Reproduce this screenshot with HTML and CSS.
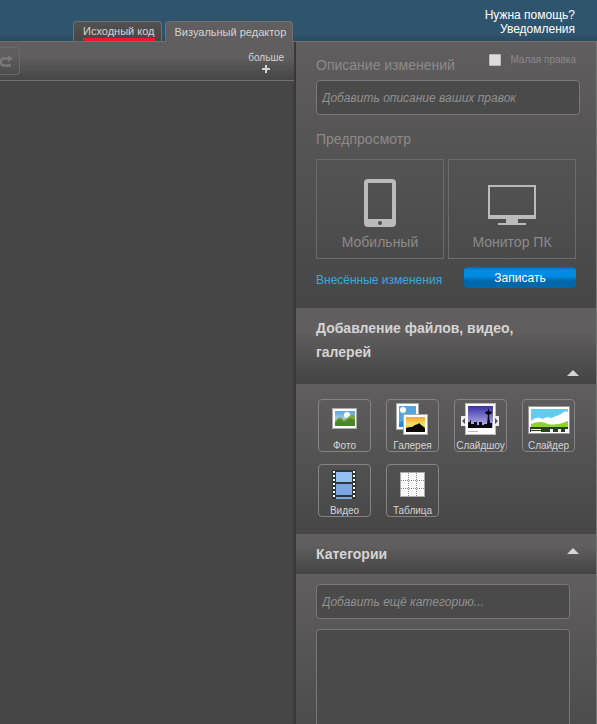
FILE: index.html
```html
<!DOCTYPE html>
<html lang="ru">
<head>
<meta charset="utf-8">
<meta name="viewport" content="width=device-width, initial-scale=1">
<title>Редактор</title>
<link rel="stylesheet" href="styles.css">
</head>
<body>
<header class="topbar">
  <nav class="tabs">
    <button type="button" class="tab tab-source"><span class="marked">Исходный код</span></button>
    <button type="button" class="tab tab-visual">Визуальный редактор</button>
  </nav>
  <nav class="help">
    <a href="#">Нужна помощь?</a>
    <a href="#">Уведомления</a>
  </nav>
</header>
<main class="workspace">
  <section class="editor">
    <div class="toolbar">
      <button type="button" class="redo" aria-label="Повторить">
        <svg width="20" height="16" viewBox="0 0 20 16"><path d="M11 12.500H4Q1 12.500 1 10V8Q1 5.500 4 5.500H9" fill="none" stroke="#7a7878" stroke-width="2.500"/><path d="M8 2L13 5.500L8 9Z" fill="#7a7878"/></svg>
      </button>
      <button type="button" class="more">больше
        <svg width="8" height="8" viewBox="0 0 8 8"><path d="M3 0H5V3H8V5H5V8H3V5H0V3H3Z" fill="#d5d4d4"/></svg>
      </button>
    </div>
    <div class="canvas"></div>
  </section>
  <aside class="rail">
    <section class="panel publish">
      <div class="summary-head">
        <label class="title" for="summary">Описание изменений</label>
        <label class="minor"><input type="checkbox">Малая правка</label>
      </div>
      <input class="field" id="summary" type="text" placeholder="Добавить описание ваших правок">
      <h2 class="title preview-title">Предпросмотр</h2>
      <div class="previews">
        <button type="button" class="preview">
          <svg width="32" height="48" viewBox="0 0 32 48"><path fill="#bbb" fill-rule="evenodd" d="M4 0H28Q32 0 32 4V44Q32 48 28 48H4Q0 48 0 44V4Q0 0 4 0ZM4 4V40H28V4ZM16 42A2 2 0 0 0 16 46A2 2 0 0 0 16 42Z"/></svg>
          Мобильный
        </button>
        <button type="button" class="preview">
          <svg width="48" height="42" viewBox="0 0 48 42"><path fill="#bbb" fill-rule="evenodd" d="M0 0H48V34H30V38H38V40H10V38H18V34H0ZM2 2V30H46V2Z"/></svg>
          Монитор ПК
        </button>
      </div>
      <div class="actions">
        <a href="#" class="diff">Внесённые изменения</a>
        <button type="button" class="save">Записать</button>
      </div>
    </section>
    <h3 class="bar bar-tall">Добавление файлов, видео, галерей<span class="arrow"></span></h3>
    <section class="panel media">
      <button type="button" class="tile">
        <svg viewBox="0 0 51 40"><defs><linearGradient id="sky" x2="0" y2="1"><stop stop-color="#5fa5dc"/><stop offset="1" stop-color="#e2f3fb"/></linearGradient></defs><rect x="13.500" y="8.500" width="24" height="20" fill="#fff" stroke="#aaa"/><path fill="url(#sky)" d="M16 11h20v15H16z"/><circle cx="28" cy="15" r="3" fill="#fff"/><path fill="#79a944" d="M16 21Q21 14 25 20L32 15Q35 13 36 16V26H16z"/><path fill="#4b852a" d="M16 23L20 19Q23 19 25 22L31 18L36 20V26H16z"/></svg>
        Фото
      </button>
      <button type="button" class="tile">
        <svg viewBox="0 0 51 40"><defs><linearGradient id="dusk" x2="0" y2="1"><stop stop-color="#f2a92c"/><stop offset="0.500" stop-color="#fbdc72"/><stop offset="1" stop-color="#f0a530"/></linearGradient></defs><rect x="9.500" y="3.500" width="22" height="26" fill="#fff" stroke="#aaa"/><path fill="#2888c9" d="M12 6h17v21H12z"/><path fill="#53a5db" d="M12 6h17v9L12 23z"/><circle cx="16" cy="10" r="3" fill="#fff"/><rect x="16.500" y="14.500" width="24" height="20" fill="#fff" stroke="#aaa"/><path fill="url(#dusk)" d="M19 17h19v15H19z"/><path fill="#090805" d="M19 28l4-1 2 0 3-2 3-1 1-1 1 1 5 4v4H19z"/></svg>
        Галерея
      </button>
      <button type="button" class="tile">
        <svg viewBox="0 0 51 40"><defs><linearGradient id="night" x2="0" y2="1"><stop stop-color="#3a31a5"/><stop offset="1" stop-color="#c6c0f0"/></linearGradient></defs><rect x="10.500" y="3.500" width="30" height="31" fill="#fff" stroke="#bbb"/><path fill="url(#night)" d="M13 6h25v22H13z"/><path fill="#080811" d="M13 22h2v-2h1v4h3v-2h3v3h2v-3h3v3h2v-1h3l1-9-3-2v-1l3-1V9h1v2l3 1v1l-3 2 1 8h2v5H13z"/><path fill="#bbb" d="M13 31h10v1H13z"/><path fill="#eee" d="M6 16h5v10H6zM39 16h5v10h-5z"/><path fill="#555" d="M10 18v6l-3-3zM40 18v6l3-3z"/></svg>
        Слайдшоу
      </button>
      <button type="button" class="tile">
        <svg viewBox="0 0 51 40"><rect x="5.500" y="6.500" width="41" height="27" fill="#fff" stroke="#999"/><path fill="#62ccee" d="M8 9h37v18H8z"/><path fill="#fff" d="M8 21q6-6 12-2 3-3 8-1 6-2 10-4 4-4 7-2v15H8z"/><path fill="#8fcf2e" d="M8 24q9-4 17 0 8 2 20-3v6H8z"/><path fill="#294027" d="M7 27h38v5H7z"/><path fill="#eee" d="M8 29h10v1H8zM8 31h10v1H8zM27 29h3v3h-3zM35 29h3v3h-3zM42 29h3v3h-3z"/></svg>
        Слайдер
      </button>
      <button type="button" class="tile">
        <svg viewBox="0 0 51 40"><path fill="#303638" d="M13 5h24v29H13z"/><path fill="#94bfef" d="M17 7h16v10H17z"/><path fill="#7ba5e3" d="M17 19h16v11H17zM17 32h16v2H17z"/><path d="M15 6v28M35 6v28" stroke="#fff" stroke-width="2" stroke-dasharray="2 2"/></svg>
        Видео
      </button>
      <button type="button" class="tile">
        <svg viewBox="0 0 51 40"><rect x="13.500" y="7.500" width="24" height="24" fill="#f8f8f8" stroke="#aaa"/><path fill="none" stroke="#888" stroke-dasharray="1 1" d="M21.500 8v23M29.500 8v23M14 15.500h23M14 23.500h23"/></svg>
        Таблица
      </button>
    </section>
    <h3 class="bar">Категории<span class="arrow"></span></h3>
    <section class="panel categories">
      <input class="field" type="text" aria-label="Категория" placeholder="Добавить ещё категорию...">
      <div class="category-list"></div>
    </section>
  </aside>
</main>
</body>
</html>
```
FILE: styles.css
```css
* { box-sizing: border-box; }
body {
  display: flex;
  flex-direction: column;
  height: 100vh;
  margin: 0;
  overflow: hidden;
  background: #464646;
  font-family: "Liberation Sans", Arial, sans-serif;
  font-size: 12px;
}
button { margin: 0; padding: 0; border: 0; background: none; font: inherit; cursor: pointer; }
svg { display: block; flex: none; }
a { text-decoration: none; }
h2, h3 { margin: 0; }

.topbar {
  display: flex;
  flex: none;
  justify-content: space-between;
  height: 42px;
  border-bottom: 1px solid #706e6e;
  background: linear-gradient(#2f556e 34px, #284a61);
}
.tabs { display: flex; align-items: flex-end; gap: 3px; padding-left: 73px; }
.tab {
  height: 20px;
  padding: 0 6px 0 9px;
  border: 1px solid #727070;
  border-bottom: 0;
  border-radius: 4px 4px 0 0;
  color: #d5d4d4;
  font-size: 11px;
  line-height: 19px;
  white-space: nowrap;
}
.tab-source { background: linear-gradient(#535151, #464646); }
.tab-visual { height: 21px; margin-bottom: -1px; background: #605e5e; }
.marked { display: block; box-shadow: inset 0 -3px #ed1c24; line-height: 19px; }
.help {
  display: flex;
  flex-direction: column;
  align-items: flex-end;
  padding: 8px 22px 0 0;
  line-height: 14px;
}
.help a { color: #fff; }

.workspace { display: flex; flex: 1; min-height: 0; }
.editor { display: flex; flex: 1; flex-direction: column; min-width: 0; box-shadow: inset -4px 0 3px -2px #363636; }
.toolbar {
  display: flex;
  align-items: flex-start;
  justify-content: space-between;
  height: 39px;
  margin-right: 2px;
  padding: 5px 10px 0 0;
  border-bottom: 1px solid #737171;
  background: linear-gradient(#605e5e 14px, #464646);
}
.redo {
  display: flex;
  align-items: center;
  width: 20px;
  height: 28px;
  border: 1px solid #6b6969;
  border-left: 0;
  border-radius: 0 4px 4px 0;
}
.more {
  display: flex;
  flex-direction: column;
  align-items: center;
  gap: 1px;
  margin-top: 5px;
  color: #d5d4d4;
  font-size: 10px;
  line-height: 12px;
}

.rail {
  flex: 0 0 301px;
  overflow: hidden;
  border-right: 1px solid #777;
  color: #8c8a8a;
}
.panel { background: linear-gradient(#605e5e, #464646); }
.publish { padding: 12px 20px 15px; }
.summary-head { display: flex; justify-content: space-between; height: 26px; }
.title { color: #8c8a8a; font-size: 14px; font-weight: normal; line-height: 22px; }
.minor { display: flex; align-items: center; height: 12px; gap: 9px; font-size: 10px; line-height: 12px; }
.minor input {
  width: 12px;
  height: 12px;
  margin: 0;
  border: 1px solid #bbb;
  border-radius: 1px;
  appearance: none;
  background: #ddd;
}
.field {
  display: block;
  width: calc(100% + 4px);
  height: 35px;
  padding: 0 5px;
  border: 1px solid #777;
  border-radius: 4px;
  background: #4a4a4a;
  color: #ccc;
  font: italic 12px "Liberation Sans", Arial, sans-serif;
}
.field::placeholder { color: #929090; opacity: 1; }
.preview-title { margin: 13px 0 9px; }
.previews { display: grid; grid-template-columns: 1fr 1fr; gap: 4px; }
.preview {
  display: flex;
  flex-direction: column;
  align-items: center;
  justify-content: flex-end;
  gap: 6px;
  height: 100px;
  padding-bottom: 7px;
  border: 1px solid #6c6a6a;
  color: #8c8a8a;
  font-size: 14px;
  line-height: 18px;
}
.actions { display: flex; align-items: flex-start; justify-content: space-between; margin-top: 8px; }
.diff { color: #3aa7df; line-height: 26px; }
.save {
  width: 112px;
  height: 21px;
  border-radius: 4px;
  background: linear-gradient(#0068aa 0, #008be5 3px, #008be5 9px, #0068aa 14px);
  color: #fff;
}

.bar {
  display: flex;
  justify-content: space-between;
  height: 40px;
  padding: 8px 17px 0 20px;
  background: linear-gradient(#605e5e 30%, #444);
  color: #d5d4d4;
  font-size: 14px;
  line-height: 24px;
}
.bar-tall { height: 76px; }
.arrow {
  flex: none;
  margin-top: 6px;
  height: 6px;
  border: solid transparent;
  border-width: 0 6px 6px;
  border-bottom-color: #d5d4d4;
}
.bar-tall .arrow { align-self: flex-end; margin-bottom: 8px; }

.media {
  display: grid;
  grid-template-columns: repeat(4, 53px);
  gap: 12px 15px;
  padding: 15px 20px 17px 22px;
}
.tile {
  display: flex;
  flex-direction: column;
  align-items: center;
  height: 53px;
  border: 1px solid #858484;
  border-radius: 4px;
  color: #d5d4d4;
  font-size: 10px;
  line-height: 12px;
}
.tile svg { width: 51px; height: 40px; }

.categories { padding: 10px 26px 10px 20px; }
.categories .field { width: 100%; }
.category-list {
  height: 140px;
  margin-top: 10px;
  border: 1px solid #777;
  border-radius: 4px;
  background: #4a4a4a;
}
```
